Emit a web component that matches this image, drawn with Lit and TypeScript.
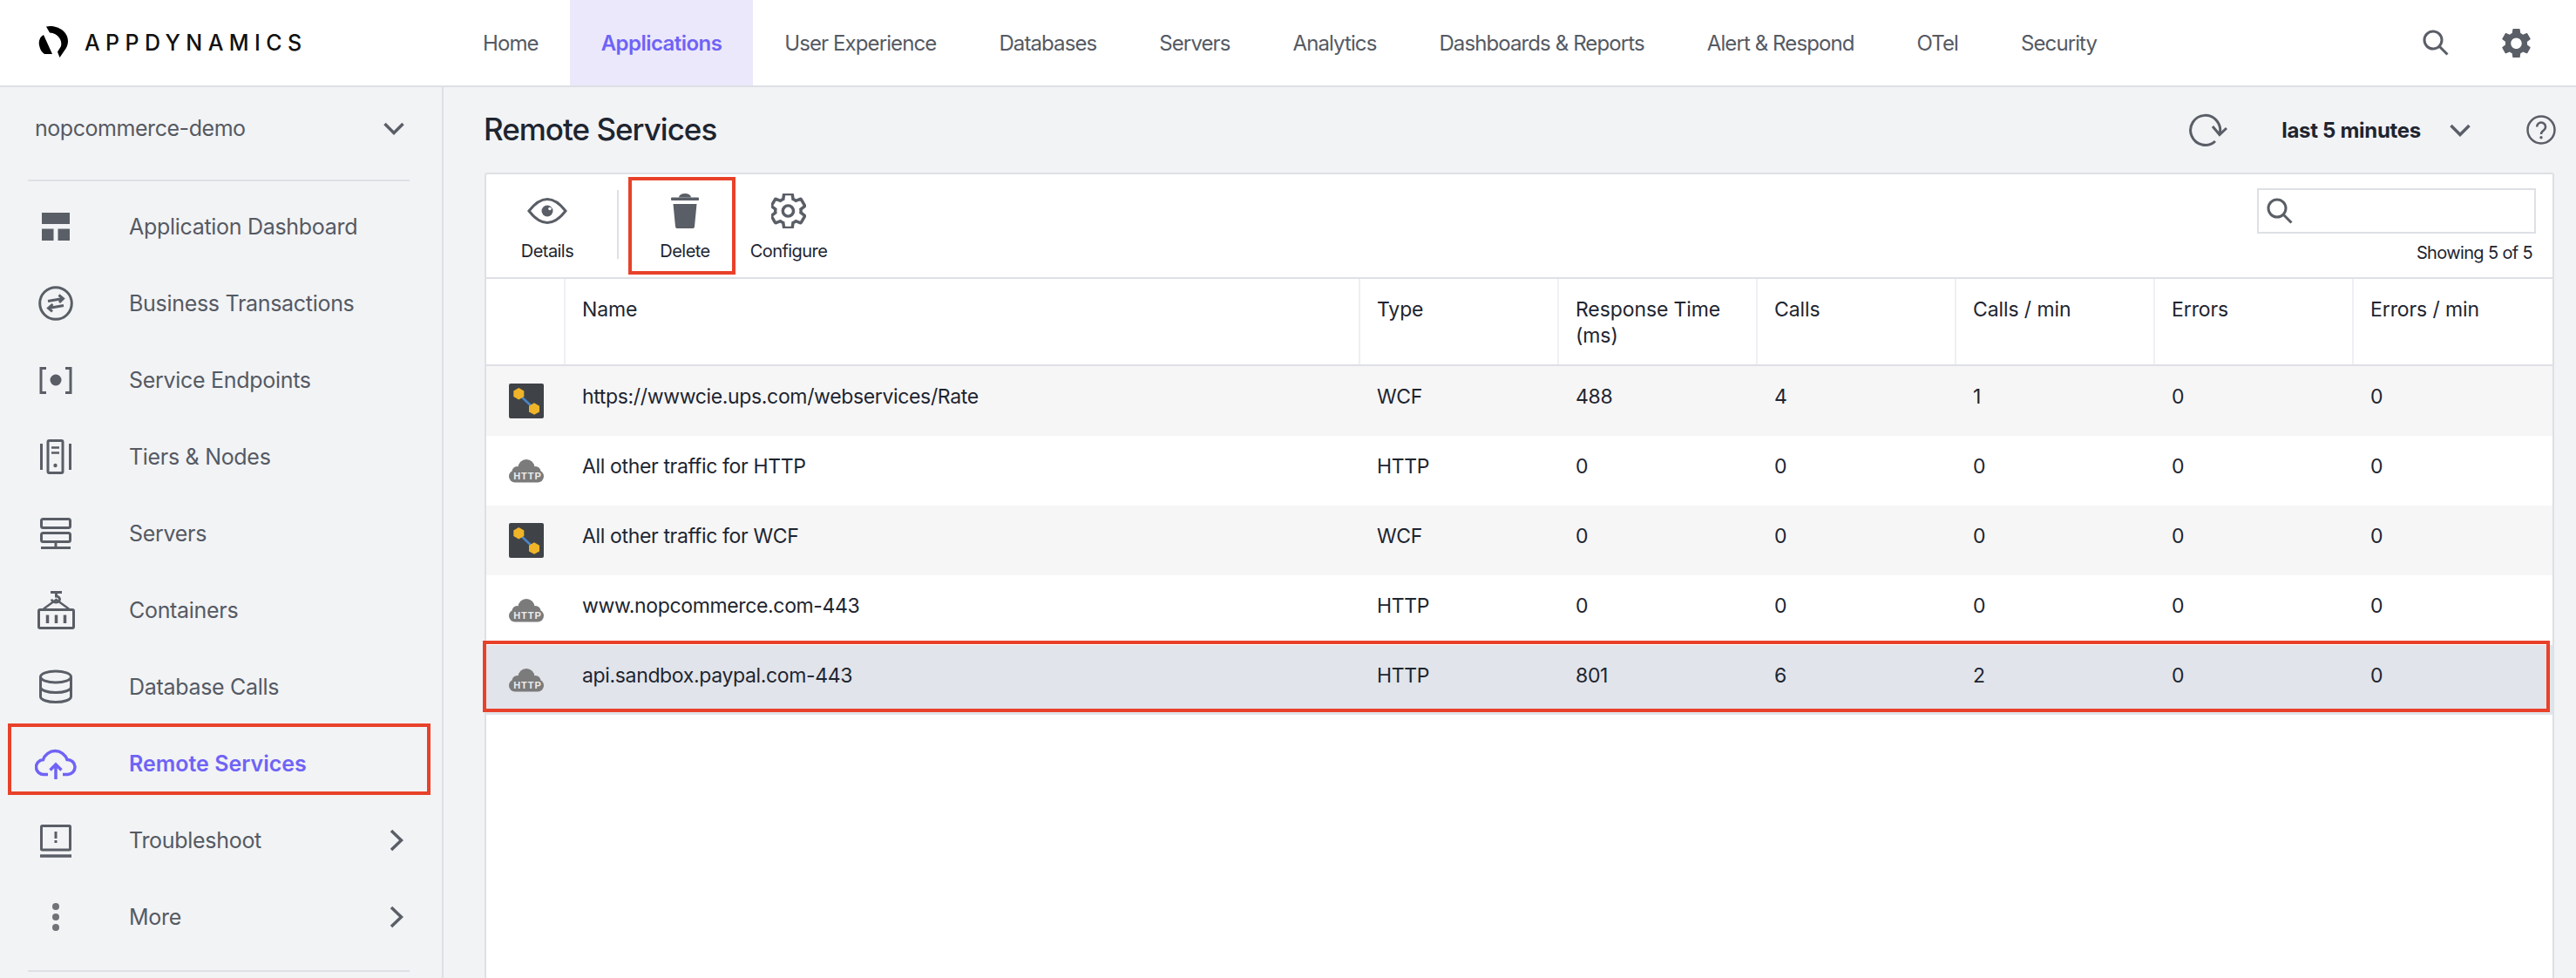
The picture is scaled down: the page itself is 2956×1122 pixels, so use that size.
import { LitElement, html, css, TemplateResult } from 'lit';
import { customElement } from 'lit/decorators.js';
import { classMap } from 'lit/directives/class-map.js';

const GEAR =
  'M19.14 12.94c.04-.3.06-.61.06-.94 0-.32-.02-.64-.07-.94l2.03-1.58c.18-.14.23-.41.12-.61l-1.92-3.32c-.12-.22-.37-.29-.59-.22l-2.39.96c-.5-.38-1.03-.7-1.62-.94l-.36-2.54c-.04-.24-.24-.41-.48-.41h-3.84c-.24 0-.43.17-.47.41l-.36 2.54c-.59.24-1.13.57-1.62.94l-2.39-.96c-.22-.08-.47 0-.59.22L2.74 8.87c-.12.21-.08.47.12.61l2.03 1.58c-.05.3-.09.63-.09.94s.02.64.07.94l-2.03 1.58c-.18.14-.23.41-.12.61l1.92 3.32c.12.22.37.29.59.22l2.39-.96c.5.38 1.03.7 1.62.94l.36 2.54c.05.24.24.41.48.41h3.84c.24 0 .44-.17.47-.41l.36-2.54c.59-.24 1.13-.56 1.62-.94l2.39.96c.22.08.47 0 .59-.22l1.92-3.32c.12-.22.07-.47-.12-.61l-2.01-1.58z';

const searchIcon = html`<svg class="line" width="30" height="30" viewBox="0 0 30 30">
  <circle cx="12" cy="12" r="10"></circle><path d="M19 19l9.5 9.5"></path>
</svg>`;

const chevronDown = html`<svg class="line" width="24" height="15" viewBox="0 0 24 15">
  <path d="M1.5 2l10.5 10.5L22.5 2" stroke-width="3.5"></path>
</svg>`;

const chevronRight = html`<svg class="line" width="16" height="26" viewBox="0 0 16 26">
  <path d="M2 2l11.5 11L2 24" stroke-width="3.5"></path>
</svg>`;

const navIcons: Record<string, TemplateResult> = {
  dashboard: html`<svg class="solid" width="40" height="40" viewBox="0 0 40 40">
    <rect x="4" y="4" width="32" height="13"></rect>
    <rect x="4" y="22.5" width="13.5" height="13.5"></rect>
    <rect x="22.5" y="22.5" width="13.5" height="13.5"></rect>
  </svg>`,
  transactions: html`<svg class="line" width="40" height="40" viewBox="0 0 40 40">
    <circle cx="20" cy="20" r="18.3"></circle>
    <path d="M11 17.5l17-3M23.5 10.5l5 4-4.5 4.5M29 22.5l-17 3M16.5 21l-5 4.5 4.5 4"></path>
  </svg>`,
  endpoints: html`<svg class="line" width="40" height="40" viewBox="0 0 40 40">
    <path d="M9 6.5H3V34.5H9M31 6.5H37V34.5H31"></path>
    <circle class="dot" cx="20" cy="20" r="6.5"></circle>
  </svg>`,
  tiers: html`<svg class="line" width="40" height="40" viewBox="0 0 40 40">
    <path d="M3.5 5V35M36.5 5V35"></path>
    <rect x="11" y="1.5" width="17" height="37" rx="1.5"></rect>
    <path d="M15 9.5H24M15 15.5H24" stroke-width="2.5"></path>
    <circle class="dot" cx="19.5" cy="30" r="2.2"></circle>
  </svg>`,
  servers: html`<svg class="line" width="40" height="40" viewBox="0 0 40 40">
    <rect x="3.5" y="3.5" width="33" height="10" rx="2"></rect>
    <rect x="3.5" y="19.5" width="33" height="10" rx="2"></rect>
    <path d="M20 30V36M3 36.5H37"></path>
  </svg>`,
  containers: html`<svg class="line" width="48" height="48" viewBox="0 0 48 48">
    <rect x="4.5" y="23.5" width="40" height="21" rx="1.5"></rect>
    <path d="M14.5 29.5V39M24.5 29.5V39M34.5 29.5V39" stroke-width="3.5"></path>
    <path d="M10 22.5L24.5 12L39 22.5" stroke-width="2.5"></path>
    <path d="M18 3.5H31M24.5 3.5V8a4.5 3.5 0 1 1-5 3.5" stroke-width="3"></path>
  </svg>`,
  database: html`<svg class="line" width="40" height="40" viewBox="0 0 40 40">
    <ellipse cx="20" cy="8.5" rx="17.5" ry="6.5"></ellipse>
    <path d="M2.5 8.5V31c0 4 8 6.5 17.5 6.5S37.5 35 37.5 31V8.5"></path>
    <path d="M2.5 20c0 4 8 6.5 17.5 6.5S37.5 24 37.5 20"></path>
  </svg>`,
  cloud: html`<svg class="line accent" width="48" height="40" viewBox="0 0 48 40">
    <path d="M15 32.5H10.5a8.5 8.5 0 0 1-1-17A14.5 14.5 0 0 1 37 15.5a8.5 8.5 0 0 1 1 17H32" stroke-width="3.5"></path>
    <path d="M24 38V21M17.5 27.5L24 21l6.5 6.5" stroke-width="3.5"></path>
  </svg>`,
  troubleshoot: html`<svg class="line" width="40" height="40" viewBox="0 0 40 40">
    <rect x="3.5" y="3.5" width="33" height="27.5" rx="1"></rect>
    <path d="M2 38H38" stroke-width="3.5"></path>
    <path d="M20 10V18M20 20V23"></path>
  </svg>`,
  more: html`<svg class="solid faded" width="40" height="40" viewBox="0 0 40 40">
    <circle cx="20" cy="8" r="4"></circle>
    <circle cx="20" cy="20" r="4"></circle>
    <circle cx="20" cy="32" r="4"></circle>
  </svg>`,
};

const wcfIcon = html`<svg width="40" height="40" viewBox="0 0 40 40">
  <rect width="40" height="40" rx="2" fill="#3f4348"></rect>
  <path d="M11 12L29 29" stroke="#4a86c8" stroke-width="2.5"></path>
  <path d="M11.3 5l6 3.4v6.700l-6 3.400-6-3.400V8.400z" fill="#f0b429"></path>
  <path d="M29 22.3l6 3.4v6.700l-6 3.400-6-3.400v-6.700z" fill="#f0b429"></path>
</svg>`;

const httpIcon = html`<svg width="40" height="27" viewBox="0 0 40 27">
  <g fill="#7b7b7b">
    <rect y="12.5" width="40" height="14" rx="7"></rect>
    <circle cx="20" cy="9.5" r="9.5"></circle>
    <circle cx="9.5" cy="14" r="6"></circle>
    <circle cx="30.5" cy="14" r="6"></circle>
  </g>
  <text class="http" x="21.5" y="22.7" text-anchor="middle">HTTP</text>
</svg>`;

const tabs = [
  'Home',
  'Applications',
  'User Experience',
  'Databases',
  'Servers',
  'Analytics',
  'Dashboards & Reports',
  'Alert & Respond',
  'OTel',
  'Security',
];

const menu = [
  { label: 'Application Dashboard', icon: 'dashboard' },
  { label: 'Business Transactions', icon: 'transactions' },
  { label: 'Service Endpoints', icon: 'endpoints' },
  { label: 'Tiers & Nodes', icon: 'tiers' },
  { label: 'Servers', icon: 'servers' },
  { label: 'Containers', icon: 'containers' },
  { label: 'Database Calls', icon: 'database' },
  { label: 'Remote Services', icon: 'cloud', active: true },
  { label: 'Troubleshoot', icon: 'troubleshoot', more: true },
  { label: 'More', icon: 'more', more: true },
];

const columns = [
  'Name',
  'Type',
  'Response Time (ms)',
  'Calls',
  'Calls / min',
  'Errors',
  'Errors / min',
];

const rows = [
  ['https://wwwcie.ups.com/webservices/Rate', 'WCF', '488', '4', '1', '0', '0'],
  ['All other traffic for HTTP', 'HTTP', '0', '0', '0', '0', '0'],
  ['All other traffic for WCF', 'WCF', '0', '0', '0', '0', '0'],
  ['www.nopcommerce.com-443', 'HTTP', '0', '0', '0', '0', '0'],
  ['api.sandbox.paypal.com-443', 'HTTP', '801', '6', '2', '0', '0'],
];

@customElement('app-root')
export class AppRoot extends LitElement {
  static styles = css`
    :host {
      display: flex;
      flex-direction: column;
      height: 1122px;
      overflow: hidden;
      background: #f2f3f5;
      color: #1e2530;
      font-family: Inter, 'Noto Sans', sans-serif;
    }

    svg {
      display: block;
      flex: none;
    }
    .line {
      fill: none;
      stroke: #5a5e66;
      stroke-width: 3;
    }
    .line .dot {
      fill: #5a5e66;
      stroke: none;
    }
    .line.accent {
      stroke: #6f63f6;
    }
    .solid {
      fill: #5a5e66;
    }
    .solid.faded {
      fill: #6f7276;
    }
    .http {
      fill: #ececec;
      font: 700 11px 'Liberation Sans', sans-serif;
      letter-spacing: 1px;
    }

    /* top bar */
    header {
      flex: none;
      display: flex;
      height: 98px;
      background: #fff;
      border-bottom: 2px solid #dde0e5;
    }
    .brand {
      flex: none;
      display: flex;
      align-items: center;
      gap: 2px;
      width: 483px;
      padding-left: 35px;
    }
    .brand svg {
      margin-top: 2px;
    }
    .brand span {
      color: #111;
      font-size: 25px;
      font-weight: 500;
      letter-spacing: 6.4px;
    }
    nav {
      display: flex;
    }
    .tab {
      display: flex;
      align-items: center;
      padding: 0 36px;
      color: #555a63;
      font-size: 24px;
      letter-spacing: -0.9px;
    }
    .tab.active {
      background: #ebe8fb;
      color: #6f63f6;
      font-weight: 600;
      letter-spacing: -0.55px;
    }
    .top-icons {
      display: flex;
      align-items: center;
      gap: 61px;
      margin-left: auto;
      padding-right: 52px;
    }
    .top-icons .gear {
      fill-rule: evenodd;
      fill: #5a5e66;
    }

    .body {
      flex: 1;
      display: flex;
      min-height: 0;
    }

    /* left menu */
    aside {
      flex: none;
      width: 507px;
      border-right: 2px solid #dde0e5;
    }
    .app-select {
      box-sizing: border-box;
      display: flex;
      align-items: center;
      justify-content: space-between;
      height: 108px;
      margin: 0 37px 0 32px;
      padding: 0 6px 12px 8px;
      border-bottom: 2px solid #dde0e5;
      color: #555a63;
      font-size: 25px;
      letter-spacing: -0.45px;
    }
    .menu {
      padding-top: 8px;
    }
    .item {
      position: relative;
      display: flex;
      align-items: center;
      height: 88px;
      padding: 0 44px 0 40px;
      color: #555a63;
      font-size: 25px;
      letter-spacing: -0.3px;
    }
    .item .icon {
      flex: none;
      display: flex;
      justify-content: center;
      width: 48px;
      margin-right: 60px;
    }
    .item .go {
      margin-left: auto;
    }
    .item.active {
      color: #6f63f6;
      font-weight: 600;
      letter-spacing: 0;
    }
    .item.active::after {
      content: '';
      position: absolute;
      left: 9px;
      top: -2px;
      width: 485px;
      height: 82px;
      box-sizing: border-box;
      border: 4px solid #e8412a;
    }
    .menu-end {
      height: 2px;
      margin: 17px 37px 0 32px;
      background: #dde0e5;
    }

    /* main area */
    main {
      flex: 1;
      display: flex;
      flex-direction: column;
      min-width: 0;
      padding: 0 25px 0 47px;
    }
    .title-row {
      flex: none;
      display: flex;
      align-items: center;
      height: 98px;
    }
    h1 {
      margin: 0 0 2px -1px;
      font-size: 35px;
      font-weight: 500;
      letter-spacing: -1px;
    }
    .range {
      display: flex;
      align-items: center;
      margin-left: auto;
      margin-right: -2px;
    }
    .range b {
      margin: 0 33px 0 62px;
      font-size: 24px;
      font-weight: 700;
      letter-spacing: -0.3px;
    }
    .range .help {
      margin-left: 64px;
    }
    .card {
      flex: 1;
      border: 2px solid #dde0e5;
      border-bottom: 0;
      border-radius: 3px 3px 0 0;
      background: #fff;
    }

    .toolbar {
      display: flex;
      height: 118px;
      border-bottom: 2px solid #dde0e5;
    }
    .tool {
      position: relative;
      box-sizing: border-box;
      display: flex;
      flex-direction: column;
      align-items: center;
      flex: none;
      padding-top: 22px;
      font-size: 20px;
      letter-spacing: -0.55px;
    }
    .tool .glyph {
      display: flex;
      align-items: center;
      height: 40px;
      margin-bottom: 13px;
    }
    .tool span {
      line-height: 26px;
    }
    .tool.marked::after {
      content: '';
      position: absolute;
      left: -5px;
      top: 3px;
      width: 123px;
      height: 112px;
      box-sizing: border-box;
      border: 4px solid #e8412a;
    }
    .sep {
      flex: none;
      width: 2px;
      height: 79px;
      margin: 18px 16px 0 10px;
      background: #dde0e5;
    }
    .finder {
      display: flex;
      flex-direction: column;
      align-items: flex-end;
      margin-left: auto;
      padding: 16px 19px 0 0;
    }
    .search-box {
      box-sizing: border-box;
      display: flex;
      align-items: center;
      width: 320px;
      height: 52px;
      padding-left: 9px;
      border: 2px solid #dde0e5;
    }
    .finder small {
      margin: 8px 4px 0 0;
      font-size: 20px;
      line-height: 28px;
      letter-spacing: -0.65px;
    }

    .grid {
      display: grid;
      grid-template-columns: 89px 912px repeat(5, 228px) 230px;
    }
    .head {
      height: 98px;
      border-bottom: 2px solid #dde0e5;
      font-size: 23px;
      line-height: 30px;
      letter-spacing: -0.1px;
    }
    .head div {
      box-sizing: border-box;
      padding: 20px 21px 0 19px;
      border-left: 2px solid #eef0f3;
    }
    .head div:first-child {
      border-left: 0;
    }
    .row {
      position: relative;
      height: 80px;
      font-size: 23px;
      line-height: 30px;
      letter-spacing: -0.35px;
    }
    .row.odd {
      background: #f6f6f7;
    }
    .row.picked {
      background: #e1e4ea;
    }
    .row.picked::after {
      content: '';
      position: absolute;
      left: -4px;
      right: 3px;
      top: -5px;
      height: 82px;
      box-sizing: border-box;
      border: 4px solid #e8412a;
    }
    .row div {
      padding: 20px 10px 0 21px;
    }
    .row .kind {
      display: flex;
      align-items: center;
      justify-content: center;
      padding: 0 0 0 2px;
    }
  `;

  render(): TemplateResult {
    return html`
      <header>
        <div class="brand">
          <svg width="60" height="60" viewBox="0 0 60 60">
            <path
              d="M18 10.5C29 8 43 15 43 27c0 3-.7 5.8-2.3 8.5L33.5 46 31 39.5 35 33c1.8-6-3-15-13-15.5z"
              fill="#000"
            ></path>
            <path d="M15 20c-4 2-6 7-5 12 1 5 3 8 6 10h9z" fill="#000"></path>
          </svg>
          <span>APPDYNAMICS</span>
        </div>
        <nav>
          ${tabs.map(
            (t) =>
              html`<div class=${classMap({ tab: true, active: t === 'Applications' })}>${t}</div>`
          )}
        </nav>
        <div class="top-icons">
          ${searchIcon}
          <svg class="gear" width="33" height="33" viewBox="2.5 2.4 19 19">
            <path d="${GEAR} M12 15.6c-1.98 0-3.6-1.62-3.6-3.6s1.62-3.6 3.6-3.6 3.6 1.62 3.6 3.6-1.62 3.6-3.6 3.6z"></path>
          </svg>
        </div>
      </header>
      <div class="body">
        <aside>
          <div class="app-select"><span>nopcommerce-demo</span>${chevronDown}</div>
          <div class="menu">
            ${menu.map(
              (m) => html`
                <div class=${classMap({ item: true, active: !!m.active })}>
                  <span class="icon">${navIcons[m.icon]}</span>
                  <span>${m.label}</span>
                  ${m.more ? html`<span class="go">${chevronRight}</span>` : ''}
                </div>
              `
            )}
          </div>
          <div class="menu-end"></div>
        </aside>
        <main>
          <div class="title-row">
            <h1>Remote Services</h1>
            <div class="range">
              <svg class="line" width="44" height="38" viewBox="0 0 44 38">
                <path d="M30 32A17 17 0 1 1 35 24"></path>
                <path d="M27 15l8 9.5L43 17"></path>
              </svg>
              <b>last 5 minutes</b>
              ${chevronDown}
              <svg class="line help" width="34" height="34" viewBox="0 0 34 34">
                <circle cx="17" cy="17" r="15.5" stroke-width="2.5"></circle>
                <path d="M12.2 13.5a4.9 4.9 0 1 1 7.7 4c-2 1.4-2.9 2.3-2.9 4.5" stroke-width="2.5"></path>
                <circle class="dot" cx="17" cy="25.8" r="1.7"></circle>
              </svg>
            </div>
          </div>
          <section class="card">
            <div class="toolbar">
              <div class="tool" style="width:140px">
                <div class="glyph">
                  <svg width="46" height="30" viewBox="0 0 46 30">
                    <path d="M2 15Q23-12 44 15 23 42 2 15z" fill="none" stroke="#5a5e66" stroke-width="3"></path>
                    <circle cx="23" cy="15" r="6.5" fill="#5a5e66"></circle>
                    <circle cx="26" cy="12.5" r="1.8" fill="#fff"></circle>
                  </svg>
                </div>
                <span>Details</span>
              </div>
              <div class="sep"></div>
              <div class="tool marked" style="width:120px">
                <div class="glyph">
                  <svg class="solid" width="32" height="40" viewBox="0 0 32 40">
                    <rect y="4.5" width="32" height="3.5" rx="1"></rect>
                    <path d="M9 4.5a7 4.5 0 0 1 14 0z"></path>
                    <path d="M2.5 12h27L27 38a2 2 0 0 1-2 2H7a2 2 0 0 1-2-2z"></path>
                  </svg>
                </div>
                <span>Delete</span>
              </div>
              <div class="tool" style="width:118px">
                <div class="glyph">
                  <svg class="line" width="40" height="40" viewBox="2.7 2.2 19.2 19.6">
                    <path d=${GEAR} stroke-width="1.7"></path>
                    <circle cx="12" cy="12" r="3" stroke-width="1.7"></circle>
                  </svg>
                </div>
                <span>Configure</span>
              </div>
              <div class="finder">
                <div class="search-box">${searchIcon}</div>
                <small>Showing 5 of 5</small>
              </div>
            </div>
            <div class="grid head">
              <div></div>
              ${columns.map((c) => html`<div>${c}</div>`)}
            </div>
            ${rows.map(
              (r, i) => html`
                <div class=${classMap({ grid: true, row: true, odd: i % 2 === 0, picked: i === 4 })}>
                  <div class="kind">${r[1] === 'WCF' ? wcfIcon : httpIcon}</div>
                  ${r.map((v) => html`<div>${v}</div>`)}
                </div>
              `
            )}
          </section>
        </main>
      </div>
    `;
  }
}

declare global {
  interface HTMLElementTagNameMap {
    'app-root': AppRoot;
  }
}
